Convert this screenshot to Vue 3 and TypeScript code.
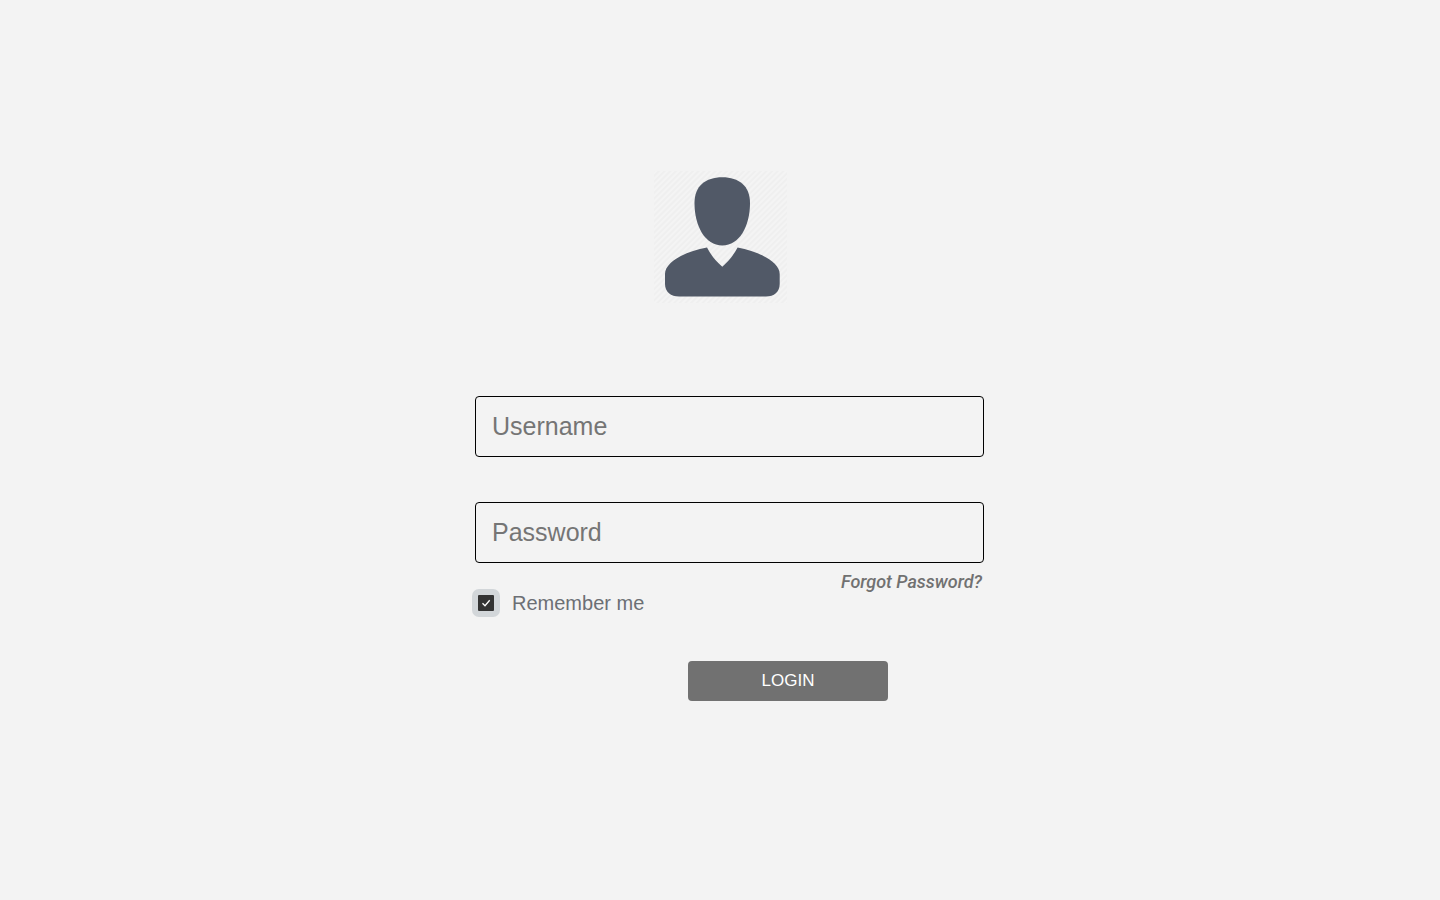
<script setup lang="ts">
import { ref } from 'vue'

const username = ref<string>('')
const password = ref<string>('')
const remember = ref<boolean>(true)
</script>

<template>
  <main class="page">
    <div class="login">
      <svg class="avatar" viewBox="0 0 134 134" role="img" aria-label="User">
        <defs>
          <pattern id="hatch" width="4" height="4" patternUnits="userSpaceOnUse" patternTransform="rotate(45)">
            <rect width="4" height="4" fill="#f4f4f4" />
            <rect width="2" height="4" fill="#efefef" />
          </pattern>
        </defs>
        <rect x="1" y="1" width="133" height="132" fill="url(#hatch)" />
        <path
          fill="#515967"
          d="M69.3 7.300C86 7.300 97 16 97 33C97 56 86.500 75.500 69.300 75.500C52 75.500 41.500 56 41.500 33C41.500 16 52.500 7.300 69.300 7.300Z"
        />
        <path
          fill="#515967"
          d="M54 77.500C57.500 84.500 63 91.500 69.300 96.700C75.500 91.500 81 84.500 84.600 77.500C106 81.500 126.700 92 126.700 104V114C126.700 122 121 126.500 113 126.500H26C18 126.500 12 122 12 114V104C12 92 32 81.500 54 77.500Z"
        />
      </svg>

      <form class="form" @submit.prevent>
        <input v-model="username" class="field" type="text" placeholder="Username" aria-label="Username" />
        <input v-model="password" class="field" type="password" placeholder="Password" aria-label="Password" />
        <div class="options">
          <label class="remember">
            <span class="tick">
              <input v-model="remember" class="box" type="checkbox" />
              <svg v-if="remember" class="check" viewBox="0 0 16 16" aria-hidden="true">
                <path d="M4.500 8.200L7 10.700L11.700 5.300" fill="none" stroke="#fff" stroke-width="1.300" />
              </svg>
            </span>
            Remember me
          </label>
          <a class="forgot" href="#">Forgot Password?</a>
        </div>
        <button class="submit" type="submit">LOGIN</button>
      </form>
    </div>
  </main>
</template>

<style>
body {
  margin: 0;
  background: #f3f3f3;
}
</style>

<style scoped>
.page {
  min-height: 100vh;
  box-sizing: border-box;
  padding: 170px 16px 40px;
  display: flex;
  justify-content: center;
  align-items: flex-start;
  background: #f3f3f3;
  font-family: "Liberation Sans", Arial, sans-serif;
}

.login {
  width: 100%;
  max-width: 528px;
  display: flex;
  flex-direction: column;
  align-items: center;
}

.avatar {
  display: block;
  width: 134px;
  height: 134px;
}

.form {
  width: 100%;
  box-sizing: border-box;
  margin-top: 92px;
  padding-left: 19px;
  display: flex;
  flex-direction: column;
}

.field {
  box-sizing: border-box;
  width: 100%;
  height: 61px;
  margin: 0 0 45px;
  padding: 0 16px;
  border: 1px solid #000;
  border-radius: 4px;
  background: transparent;
  color: #333;
  font-family: inherit;
  font-size: 25px;
  outline: none;
}

.field + .field {
  margin-bottom: 8px;
}

.field::placeholder {
  color: #757575;
  opacity: 1;
}

.options {
  display: flex;
  justify-content: space-between;
  align-items: flex-start;
}

.remember {
  display: flex;
  align-items: center;
  gap: 12px;
  margin-top: 18px;
  margin-left: -3px;
  color: #6c6f75;
  font-size: 20px;
  line-height: 28px;
}

.tick {
  display: grid;
  padding: 6px;
  border-radius: 7px;
  background: #d2d6d9;
}

.box,
.check {
  grid-area: 1 / 1;
  width: 16px;
  height: 16px;
}

.box {
  appearance: none;
  margin: 0;
  border-radius: 1px;
  background: #333;
}

.check {
  pointer-events: none;
}

.forgot {
  padding-right: 2px;
  color: #717171;
  font-family: Roboto, sans-serif;
  font-size: 18px;
  font-style: italic;
  font-weight: 500;
  line-height: 22px;
  text-decoration: none;
}

.submit {
  align-self: flex-end;
  width: 200px;
  height: 40px;
  margin: 44px 96px 0 0;
  padding: 0;
  border: 0;
  border-radius: 4px;
  background: #717171;
  color: #fff;
  font-family: inherit;
  font-size: 17px;
  cursor: pointer;
}
</style>
